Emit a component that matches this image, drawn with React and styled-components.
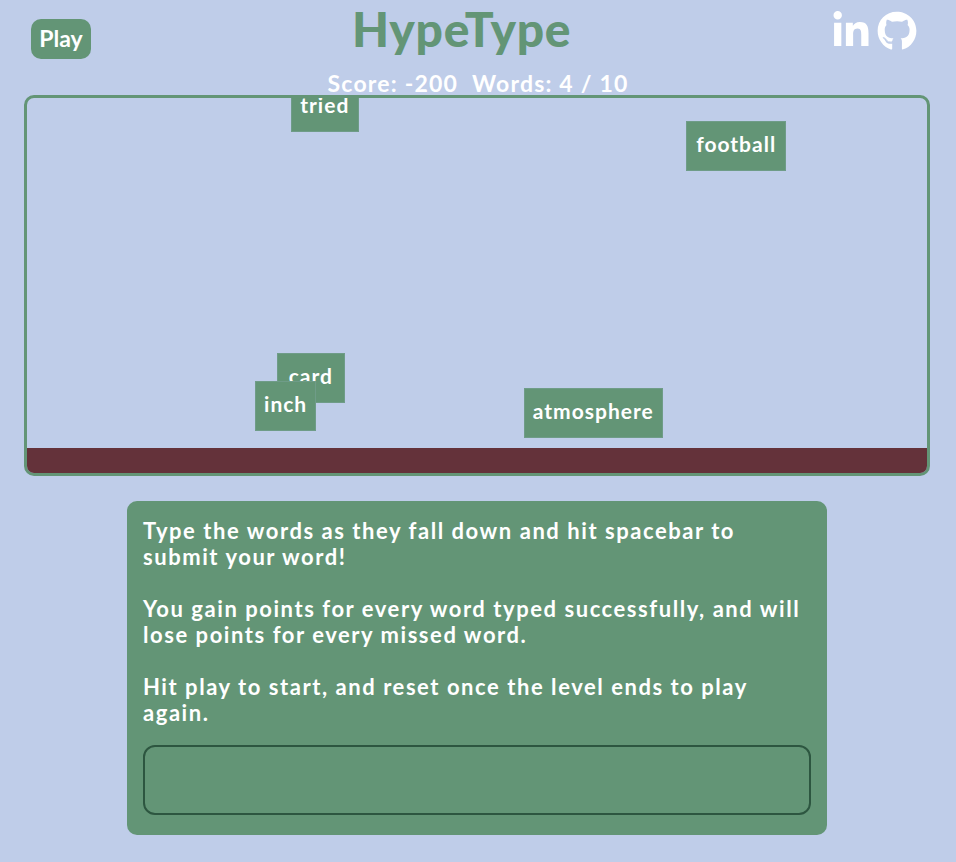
import React from "react";
import styled, { createGlobalStyle } from "styled-components";
import { FaLinkedinIn, FaGithub } from "react-icons/fa";

const GlobalStyle = createGlobalStyle`
  body {
    margin: 0;
    background-color: #bfcde9;
    font-family: "Lato", "Noto Sans", sans-serif;
    font-weight: 700;
    color: #fff;
  }
`;

const Page = styled.div`
  width: 956px;
  height: 862px;
  overflow: hidden;
`;

const Header = styled.header`
  display: flex;
  justify-content: space-between;
  align-items: flex-start;
  height: 70px;
  padding: 0 39px 0 31px;
`;

const PlayButton = styled.button`
  width: 60px;
  height: 40px;
  margin-top: 19px;
  padding: 0 0 2px;
  border: none;
  border-radius: 10px;
  background-color: #639576;
  color: #fff;
  font-family: inherit;
  font-weight: 700;
  font-size: 23px;
`;

const Title = styled.h1`
  margin: 0;
  width: 218px;
  text-align: center;
  color: #639576;
  font-size: 48px;
  font-weight: 900;
  line-height: 57px;
  letter-spacing: 0.7px;
  white-space: nowrap;
`;

const Socials = styled.div`
  display: flex;
  gap: 6px;
  padding-top: 11px;
  font-size: 40px;
  line-height: 0;
`;

const ScoreRow = styled.div`
  display: flex;
  justify-content: center;
  gap: 14px;
  height: 25px;
  line-height: 26px;
  font-size: 23px;
  letter-spacing: 1.2px;
`;

const Game = styled.div`
  position: relative;
  width: 906px;
  height: 381px;
  margin-left: 24px;
  box-sizing: border-box;
  display: flex;
  flex-direction: column;
  justify-content: flex-end;
  border: 3px solid #639576;
  border-radius: 10px;
  overflow: hidden;
`;

const Floor = styled.div`
  height: 25px;
  background-color: #64323a;
`;

const Word = styled.div`
  position: absolute;
  height: 50px;
  box-sizing: border-box;
  padding: 0 0 5px;
  display: flex;
  align-items: center;
  justify-content: center;
  background-color: #639576;
  border: 1px solid #6f9c88;
  font-size: 21px;
  line-height: 1;
  letter-spacing: 1px;
`;

const Panel = styled.section`
  width: 700px;
  height: 334px;
  margin: 25px 0 0 127px;
  box-sizing: border-box;
  padding: 17px 16px 20px;
  display: flex;
  flex-direction: column;
  border-radius: 10px;
  background-color: #639576;
`;

const Copy = styled.p`
  margin: 0 0 26px;
  font-size: 22px;
  line-height: 26px;
  letter-spacing: 1.55px;

  &:last-of-type {
    margin-bottom: 19px;
  }
`;

const WordInput = styled.input`
  width: 100%;
  height: 70px;
  flex-shrink: 0;
  box-sizing: border-box;
  border: 2px solid #2d5640;
  border-radius: 12px;
  background: transparent;
  color: #fff;
  outline: none;
`;

// x / y are relative to the inside of the game border
const words = [
  { text: "tried", x: 263.5, y: -16, w: 68.5 },
  { text: "football", x: 659, y: 23, w: 100.3 },
  { text: "card", x: 250, y: 255, w: 67.5 },
  { text: "inch", x: 228, y: 283, w: 61.3 },
  { text: "atmosphere", x: 497, y: 290, w: 138.5 },
];

export default function App() {
  return (
    <Page>
      <GlobalStyle />
      <Header>
        <PlayButton>Play</PlayButton>
        <Title>HypeType</Title>
        <Socials>
          <FaLinkedinIn />
          <FaGithub />
        </Socials>
      </Header>
      <ScoreRow>
        <span>Score: -200</span>
        <span>Words: 4 / 10</span>
      </ScoreRow>
      <Game>
        {words.map((word) => (
          <Word
            key={word.text}
            style={{ left: word.x, top: word.y, width: word.w }}
          >
            {word.text}
          </Word>
        ))}
        <Floor />
      </Game>
      <Panel>
        <Copy>
          Type the words as they fall down and hit spacebar to submit your word!
        </Copy>
        <Copy>
          You gain points for every word typed successfully, and will lose
          points for every missed word.
        </Copy>
        <Copy>
          Hit play to start, and reset once the level ends to play again.
        </Copy>
        <WordInput />
      </Panel>
    </Page>
  );
}
